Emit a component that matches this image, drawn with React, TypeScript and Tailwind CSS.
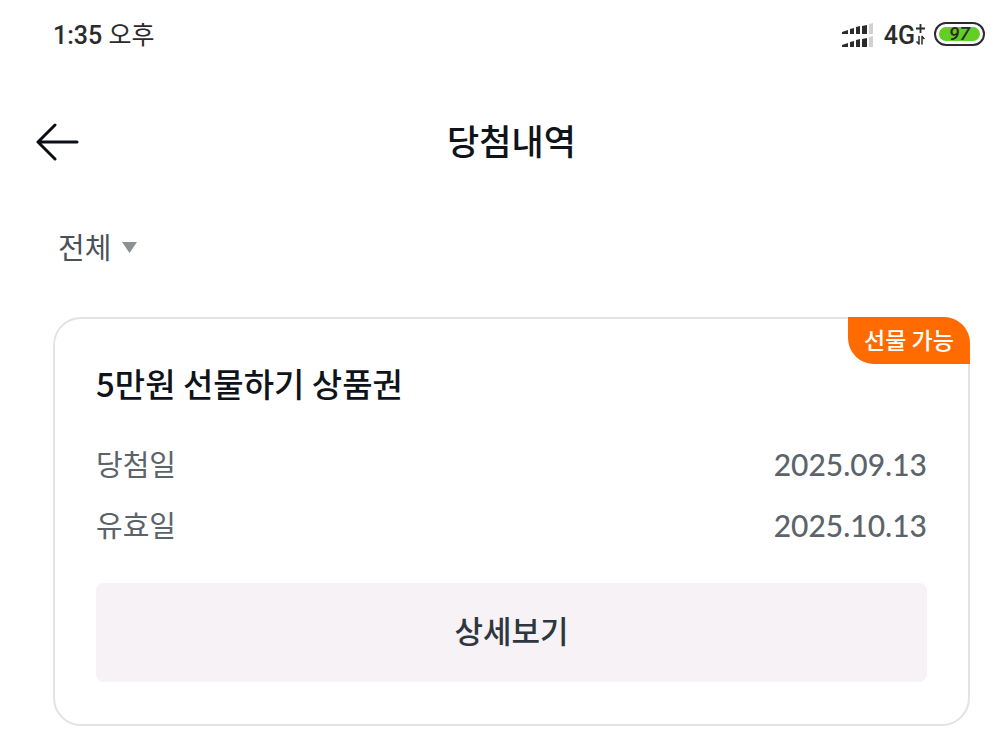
import React, { useState } from 'react';

const prize = {
  name: '5만원 선물하기 상품권',
  badge: '선물 가능',
  dates: [
    { label: '당첨일', value: '2025.09.13' },
    { label: '유효일', value: '2025.10.13' },
  ],
};

function SignalIcon() {
  return (
    <svg width="32" height="26" viewBox="0 0 32 26" aria-hidden="true">
      {[0, 13].map((y) => (
        <g key={y} fill="#2b2b2b">
          <path d={`M0 ${y + 11}v-2l6-2v4z`} />
          <path d={`M8 ${y + 11}v-5l4-1v6z`} />
          <path d={`M14 ${y + 11}v-7l4-1v8z`} />
          <path d={`M20 ${y + 11}v-8l5-1v9z`} />
          <path d={`M27 ${y + 11}v-10l4-1v11z`} fill="#d2d0d2" />
        </g>
      ))}
    </svg>
  );
}

function DataIcon() {
  return (
    <svg width="11" height="24" viewBox="0 0 11 24" fill="none" stroke="#2b2b2b" aria-hidden="true">
      <path d="M5.500 0v9M1 4.500h9" strokeWidth="1.800" />
      <path d="M4 12v8.500M4.500 20.500l-3-3M7 20.500v-8.500M6.500 12l3 3" strokeWidth="1.500" />
    </svg>
  );
}

function StatusBar() {
  return (
    <div className="flex h-[72px] items-center justify-between pl-[53px] pr-[23px] text-[#2b2b2b]">
      <span className="text-[25px] leading-8 font-medium">
        1:35 <span className="font-normal">오후</span>
      </span>
      <div className="flex items-center">
        <SignalIcon />
        <span className="ml-[10px] text-[25px] leading-8 font-medium">4G</span>
        <DataIcon />
        <div className="mb-1 ml-2 flex h-6 w-[51px] rounded-full border-2 border-[#2b2b2b] p-[3px]">
          <span className="flex flex-1 items-center justify-center rounded-full bg-[#62cf25] text-[19px] leading-4 font-medium italic">97</span>
        </div>
      </div>
    </div>
  );
}

export default function App() {
  const [filter, setFilter] = useState('all');

  return (
    <div className="min-h-screen bg-white font-[Roboto,'Noto_Sans_CJK_KR',sans-serif]">
      <StatusBar />

      <header className="grid h-[140px] grid-cols-[48px_1fr_48px] items-center pl-9 pr-[21px]">
        <button type="button" aria-label="뒤로" className="w-11">
          <svg width="44" height="40" viewBox="0 0 44 40" fill="none" stroke="#0b0e16" strokeWidth="3" strokeLinecap="round" strokeLinejoin="round">
            <path d="M19 3L2 20l17 17M2 20h39" />
          </svg>
        </button>
        <h1 className="pb-1 text-center font-['Noto_Sans_CJK_KR',sans-serif] text-[35px] leading-[48px] font-medium text-[#0f141a]">당첨내역</h1>
      </header>

      <main className="pl-[53px] pr-[38px] font-['Noto_Sans_CJK_KR',sans-serif]">
        <div className="ml-[5px] flex h-[72px] items-center">
          <div className="relative">
            <select
              aria-label="당첨내역 필터"
              value={filter}
              onChange={(e) => setFilter(e.target.value)}
              className="field-sizing-content h-11 cursor-pointer appearance-none bg-transparent pr-[26px] pb-1 text-[29px] leading-10 text-[#4a5259]"
            >
              <option value="all">전체</option>
            </select>
            <svg width="15" height="11" viewBox="0 0 15 11" className="pointer-events-none absolute right-0 top-4" aria-hidden="true">
              <path d="M0 0h15L7.500 11z" fill="#8b9094" />
            </svg>
          </div>
        </div>

        <section className="relative mt-[33px] rounded-[28px] border-2 border-[#e3e2e4] px-[41px] pt-10 pb-[42px]">
          <span className="absolute -top-[2px] -right-[2px] flex h-[47px] w-[122px] items-center justify-center rounded-tr-[26px] rounded-bl-[26px] bg-[#ff6b00] pb-1 text-[23px] leading-8 font-medium text-white">
            {prize.badge}
          </span>
          <h2 className="text-[33px] leading-[48px] font-medium text-[#0f141a]">{prize.name}</h2>

          <dl className="mt-[25px]">
            {prize.dates.map((date) => (
              <div key={date.label} className="flex h-[61px] items-center justify-between text-[29px] leading-[44px] text-[#5b646b]">
                <dt>{date.label}</dt>
                <dd className="pt-[2px] font-[Lato,sans-serif] text-[30px] font-medium">{date.value}</dd>
              </div>
            ))}
          </dl>

          <button type="button" className="mt-[29px] h-[99px] w-full rounded-lg bg-[#f6f2f6] pb-[6px] text-[31px] leading-[44px] font-medium text-[#2f373e]">
            상세보기
          </button>
        </section>
      </main>
    </div>
  );
}
